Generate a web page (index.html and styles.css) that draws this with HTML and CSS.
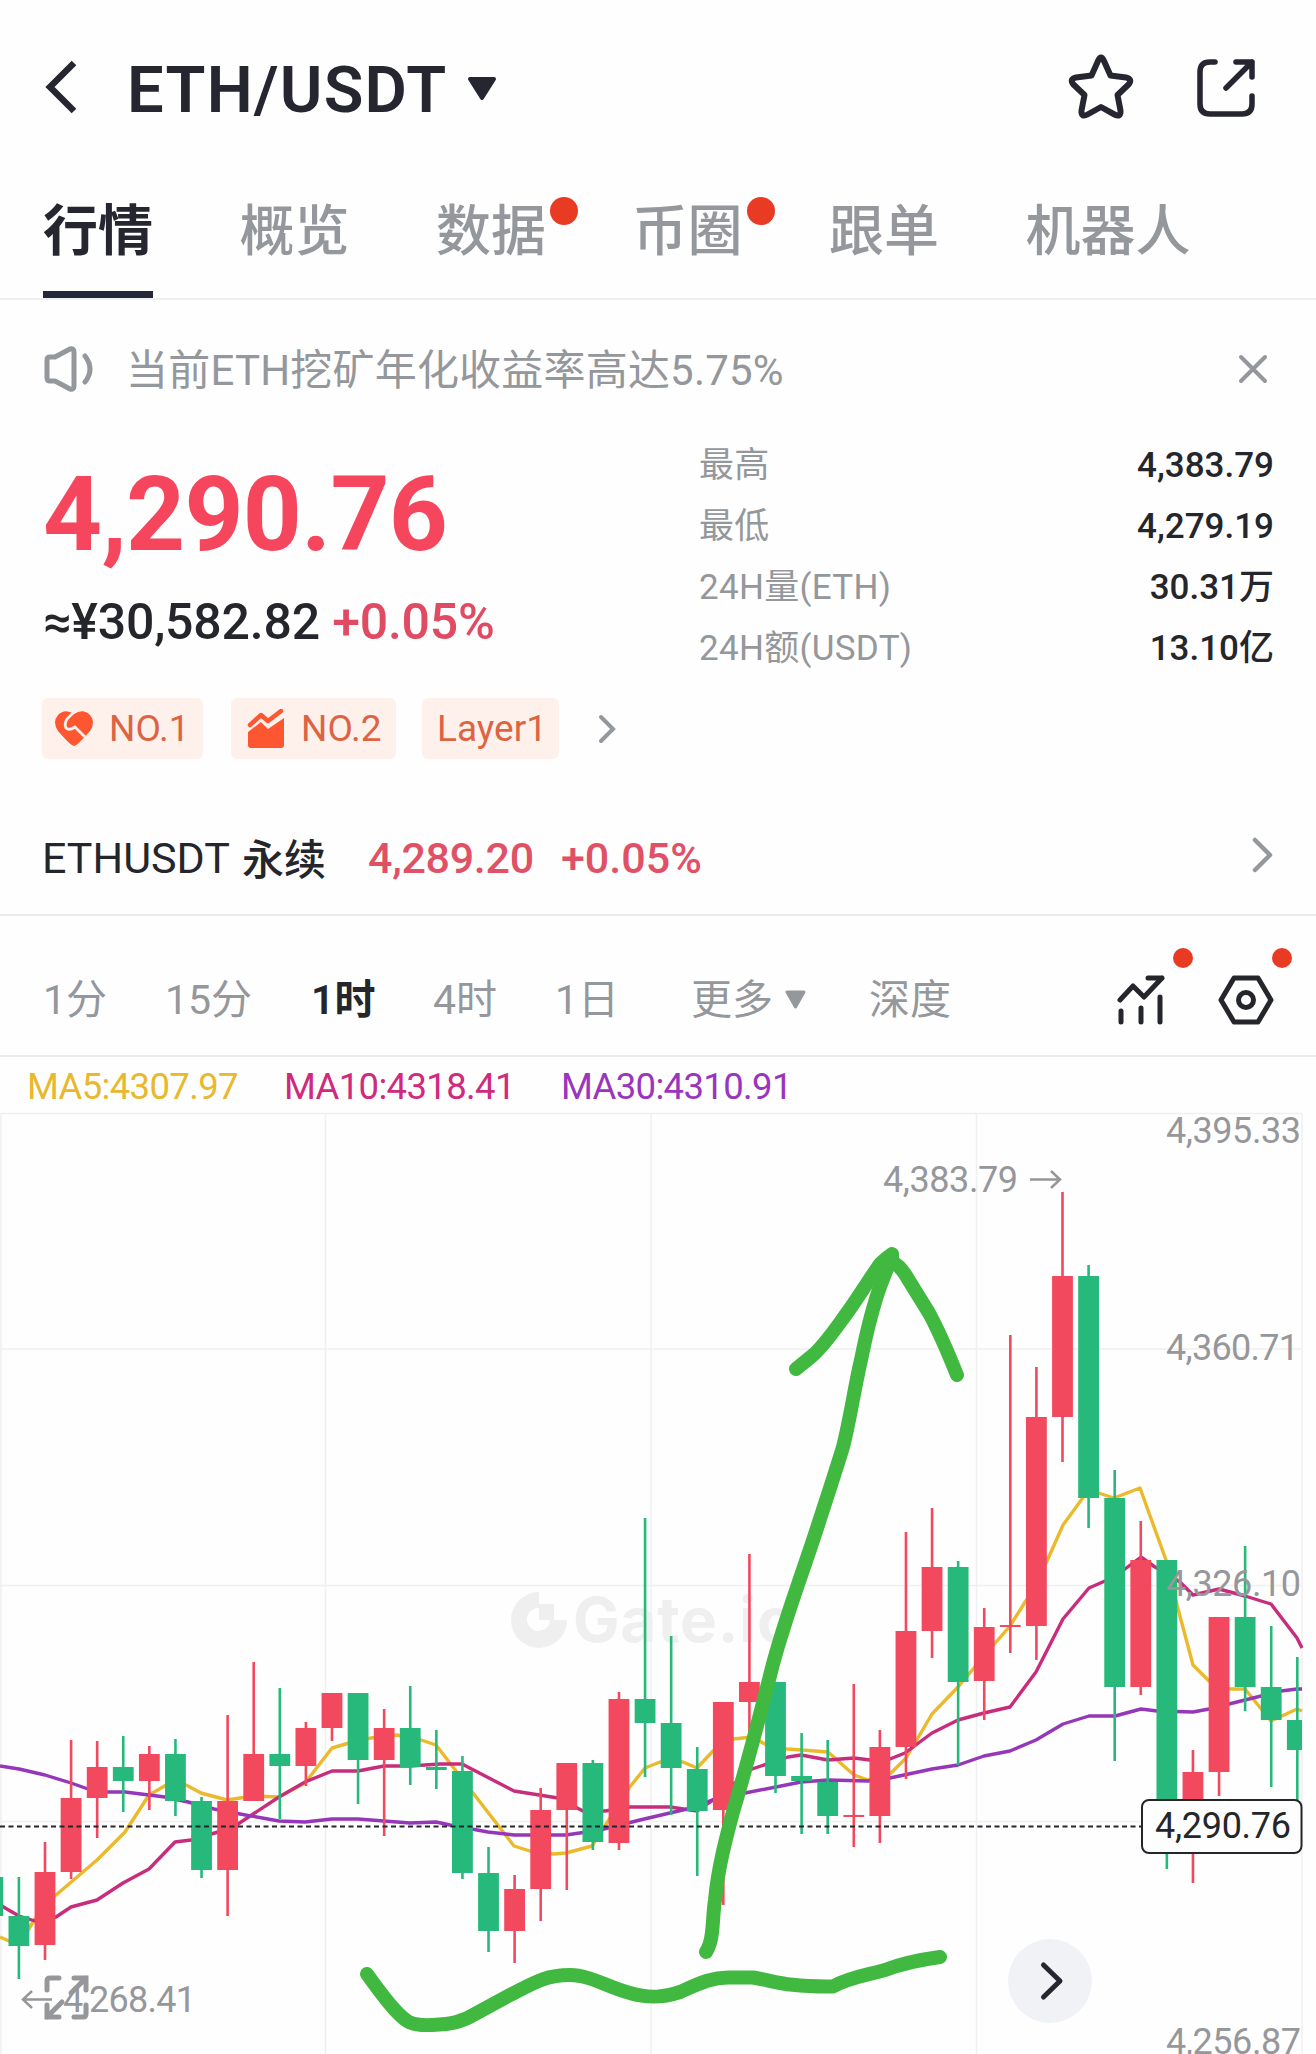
FILE: index.html
```html
<!DOCTYPE html>
<html lang="zh-CN">
  <head>
    <title>ETH/USDT</title>
    <meta charset="UTF-8" />
    <meta name="viewport" content="width=device-width, initial-scale=1.0" />
    <link rel="stylesheet" href="styles.css">
  </head>
  <body>
    <header class="header">
      <svg class="back" width="34" height="56" viewBox="0 0 34 56">
        <path d="M30 4 L6 28 L30 52" fill="none" stroke="#25262f" stroke-width="6.500" />
      </svg>
      <h1 class="pair">ETH/USDT</h1>
      <svg class="pair-caret" width="30" height="26" viewBox="0 0 30 26">
        <path d="M3 3 H27 L15 22 Z" fill="#25262f" stroke="#25262f" stroke-width="4" stroke-linejoin="round" />
      </svg>
      <svg class="star" width="68" height="68" viewBox="0 0 68 68">
        <path d="M31 8 Q34 1 37 8 L43.500 22.500 L59 24.500 Q66 26 61.500 31.500 L50.500 42 L53.500 57.500 Q54 65 47.500 61.500 L34 54 L20.500 61.500 Q14 65 14.500 57.500 L17.500 42 L6.500 31.500 Q2 26 9 24.500 L24.500 22.500 Z" fill="none" stroke="#25262f" stroke-width="6" stroke-linejoin="round" />
      </svg>
      <svg class="share" width="60" height="60" viewBox="0 0 60 60">
        <path d="M19 4 H14 Q4 4 4 14 V46 Q4 56 14 56 H46 Q56 56 56 46 V38 M40 4 H56 V19 M56 4 L30 30" fill="none" stroke="#25262f" stroke-width="5.500" stroke-linecap="round" stroke-linejoin="round" />
      </svg>
    </header>

    <nav class="tabs">
      <a class="tab active">行情</a>
      <a class="tab">概览</a>
      <a class="tab">数据<i class="dot"></i></a>
      <a class="tab">币圈<i class="dot"></i></a>
      <a class="tab">跟单</a>
      <a class="tab">机器人</a>
    </nav>

    <div class="notice">
      <svg width="52" height="48" viewBox="0 0 52 48" fill="none" stroke="#94979b" stroke-width="5" stroke-linecap="round" stroke-linejoin="round">
        <path d="M4 15 Q4 12 7 12 H12 L27 4 Q31 3 31 7 V41 Q31 45 27 44 L12 36 H7 Q4 36 4 33 Z" />
        <path d="M42 11 Q52 24 42 37" />
      </svg>
      <span class="notice-text">当前ETH挖矿年化收益率高达5.75%</span>
      <svg class="close" width="30" height="30" viewBox="0 0 30 30">
        <path d="M3 3 L27 27 M27 3 L3 27" stroke="#94979b" stroke-width="4" stroke-linecap="round" />
      </svg>
    </div>

    <section class="ticker">
      <div class="ticker-left">
        <div class="price">4,290.76</div>
        <div class="fiat">≈¥30,582.82 <span class="up">+0.05%</span></div>
      </div>
      <div class="stats">
        <div class="stat"><span>最高</span><b>4,383.79</b></div>
        <div class="stat"><span>最低</span><b>4,279.19</b></div>
        <div class="stat"><span>24H量(ETH)</span><b>30.31万</b></div>
        <div class="stat"><span>24H额(USDT)</span><b>13.10亿</b></div>
      </div>
    </section>

    <div class="tags">
      <span class="tag tag-hot">
        <svg width="40" height="38" viewBox="0 0 40 38">
          <path d="M20 36 Q16 35 4 21 Q-2 12 4 5 Q11 -2 20 4 Q29 -2 36 5 Q42 12 36 21 Q24 35 20 36 Z" fill="#fd5631" />
          <path d="M20 2 L13 9 Q10 14 12 18 Q15 21 21 17 L32 28" fill="none" stroke="#fef1ec" stroke-width="2.800" />
        </svg>
        NO.1
      </span>
      <span class="tag tag-rank">
        <svg width="38" height="40" viewBox="0 0 38 40">
          <path d="M3 16 L14 6 L21 12 L34 2" fill="none" stroke="#fd5631" stroke-width="4.500" stroke-linecap="round" stroke-linejoin="round" />
          <path d="M1 23 L14 13 L21 20 L37 9 V36 Q37 39 34 39 H4 Q1 39 1 36 Z" fill="#fd5631" />
        </svg>
        NO.2
      </span>
      <span class="tag tag-layer">Layer1</span>
      <svg class="tags-more" width="18" height="30" viewBox="0 0 18 30">
        <path d="M3 3 L15 15 L3 27" fill="none" stroke="#94979b" stroke-width="4" stroke-linecap="round" />
      </svg>
    </div>

    <div class="perp">
      <span class="perp-name">ETHUSDT</span>
      <span class="perp-type">永续</span>
      <span class="perp-price">4,289.20</span>
      <span class="perp-change">+0.05%</span>
      <svg class="perp-arrow" width="22" height="36" viewBox="0 0 22 36">
        <path d="M3 3 L18 18 L3 33" fill="none" stroke="#94979b" stroke-width="4.500" stroke-linecap="round" stroke-linejoin="round" />
      </svg>
    </div>

    <div class="intervals">
      <span class="iv">1分</span>
      <span class="iv iv-15m">15分</span>
      <span class="iv active">1时</span>
      <span class="iv">4时</span>
      <span class="iv iv-day">1日</span>
      <span class="iv iv-more">更多
        <svg width="21" height="20" viewBox="0 0 21 20"><path d="M2 2 H19 L10.500 17 Z" fill="#94979b" stroke="#94979b" stroke-width="3" stroke-linejoin="round" /></svg>
      </span>
      <span class="iv iv-depth">深度</span>
      <span class="tool tool-indicator">
        <svg width="48" height="50" viewBox="0 0 48 50" fill="none" stroke="#25262b" stroke-width="5" stroke-linecap="round" stroke-linejoin="round">
          <path d="M3 25 L16 11 L27 22 L45 3 M31 3 H45 M4 36 V47 M24 33 V47 M43 22 V47" />
        </svg>
        <i class="dot-sm"></i>
      </span>
      <span class="tool tool-settings">
        <svg width="56" height="50" viewBox="0 0 56 50" fill="none" stroke="#25262b" stroke-width="5" stroke-linejoin="round">
          <path d="M16 3 H40 L53 25 L40 47 H16 L3 25 Z" />
          <circle cx="28" cy="25" r="7.500" />
        </svg>
        <i class="dot-sm"></i>
      </span>
    </div>

    <div class="legend">
      <span class="ma5">MA5:4307.97</span>
      <span class="ma10">MA10:4318.41</span>
      <span class="ma30">MA30:4310.91</span>
    </div>

    <svg class="chart" width="1316" height="942" viewBox="0 1112 1316 942">
      <g class="grid">
        <path d="M1 1113.500 H1302 M0 1349 H1302 M0 1585.500 H1302 M0 1821.500 H1302" />
        <path d="M1 1113 V2054 M325.500 1113 V2054 M651 1113 V2054 M976.500 1113 V2054 M1302 1113 V2054" />
      </g>
      <g class="watermark">
        <path d="M539 1592 A28 28 0 1 0 567 1620 H550 A11.500 11.500 0 1 1 539 1608 Z" />
        <path d="M539 1604 H554 V1620 H539 Z" />
        <text x="573" y="1642" textLength="222">Gate.io</text>
      </g>

      <path class="line ma5-line" d="M0 1937 L9 1941 L22 1940 L33 1922 L45 1905 L56 1895 L97 1860 L125 1832 L149 1795 L175 1780 L188 1786 L201 1793 L227 1800 L253 1796 L279 1797 L305 1783 L332 1748 L349 1743 L371 1738 L397 1735 L421 1740 L436 1745 L473 1793 L514 1846 L530 1851 L553 1854 L566 1853 L592 1846 L605 1826 L629 1788 L645 1768 L660 1762 L683 1762 L697 1768 L713 1751 L733 1739 L752 1737 L765 1744 L787 1749 L802 1750 L828 1752 L854 1775 L868 1780 L891 1773 L906 1758 L932 1714 L958 1687 L984 1656 L1010 1626 L1027 1599 L1047 1561 L1063 1525 L1082 1499 L1089 1490 L1114 1498 L1140 1488 L1166 1560 L1177 1605 L1193 1665 L1209 1681 L1230 1689 L1245 1689 L1271 1721 L1297 1709 L1302 1711" />
      <path class="line ma10-line" d="M0 1905 L19 1916 L35 1921 L56 1917 L71 1907 L97 1900 L123 1883 L149 1869 L175 1842 L191 1840 L218 1832 L238 1824 L279 1797 L305 1782 L332 1771 L358 1771 L384 1766 L410 1766 L440 1764 L462 1764 L514 1791 L558 1798 L583 1811 L605 1811 L630 1807 L670 1807 L697 1811 L720 1795 L752 1769 L788 1757 L801 1755 L828 1760 L854 1758 L870 1760 L890 1759 L905 1753 L932 1733 L958 1720 L984 1713 L1010 1707 L1036 1672 L1063 1619 L1089 1588 L1105 1581 L1125 1569 L1141 1557 L1155 1567 L1180 1582 L1193 1595 L1219 1589 L1245 1596 L1271 1604 L1297 1638 L1302 1648" />
      <path class="line ma30-line" d="M0 1766 L19 1769 L45 1775 L71 1783 L88 1789 L108 1792 L125 1792 L165 1797 L188 1802 L214 1809 L240 1814 L279 1821 L305 1822 L332 1819 L358 1819 L384 1821 L410 1823 L436 1822 L450 1825 L488 1832 L514 1835 L566 1835 L600 1830 L640 1820 L687 1809 L715 1799 L745 1793 L776 1787 L801 1782 L828 1780 L868 1781 L890 1778 L932 1769 L958 1765 L984 1756 L1010 1751 L1036 1740 L1063 1724 L1089 1716 L1115 1716 L1141 1709 L1157 1711 L1193 1712 L1209 1709 L1245 1700 L1281 1691 L1297 1689 L1302 1689" />

      <g id="candles"></g>

      <path class="last-line" d="M0 1826.500 H1142" />

      <g class="axis">
        <text x="1166" y="1143" textLength="135">4,395.33</text>
        <text x="1166" y="1360" textLength="133">4,360.71</text>
        <text x="1166" y="1596" textLength="135">4,326.10</text>
        <text x="1166" y="2054" textLength="135">4,256.87</text>
        <text x="883" y="1192" textLength="135">4,383.79</text>
        <path d="M1030 1179.500 H1060 M1051 1171 L1060 1179.500 L1051 1188" />
        <text x="63" y="2012" textLength="133">4,268.41</text>
        <path d="M52 1999.500 H23 M32 1991 L23 1999.500 L32 2008" />
      </g>

      <rect class="last-box" x="1142" y="1800" width="159.500" height="53" rx="7" />
      <text class="last-text" x="1155" y="1838" textLength="136">4,290.76</text>

      <path class="expand" d="M47 1990 V1981 Q47 1978 50 1978 H59 M74 1978 H86 V1990 M86 1978 L71 1993 M86 2005 V2014 Q86 2017 83 2017 H74 M59 2017 H47 V2005 M47 2017 L62 2002" />

      <circle cx="1050" cy="1981" r="42" fill="#f1f2f6" />
      <path d="M1043.500 1965 L1060 1981 L1043.500 1997" fill="none" stroke="#25262f" stroke-width="5" stroke-linecap="round" stroke-linejoin="round" />

      <!-- hand drawn trend marks -->
      <g class="marker">
        <path d="M367 1974 C375 1985 384 1998 395 2010 C406 2022 411 2026 432 2025 C452 2024 462 2022 475 2014 L510 1995 C535 1982 546 1975 570 1975 C590 1975 610 1988 630 1993 C650 1999 665 1997 680 1992 C700 1983 712 1977 730 1977.500 H753 C775 1981 785 1987 833 1986.500 C850 1977 868 1975 885 1970 C903 1963 918 1960 940 1957" />
        <path d="M706 1952 C714 1940 712 1920 715 1900 C718 1868 726 1838 733 1812 C745 1772 760 1715 773 1664 C786 1615 802 1575 819 1522 C831 1485 836 1470 843 1447 C850 1420 855 1385 861 1360 C866 1335 874 1303 881 1284 L892 1256" />
        <path d="M796 1369 L812 1356 C824 1346 836 1328 847 1313 C860 1295 872 1275 880 1264 Q886 1258 892 1254 V1262 C899 1265 903 1270 908 1279 L929 1313 Q941 1335 957 1375" />
      </g>
    </svg>

    <script src="chart.js"></script>
  </body>
</html>
```
FILE: styles.css
```css
* {
  box-sizing: border-box;
}
body {
  margin: 0;
  width: 1316px;
  height: 2054px;
  overflow: hidden;
  background: #fefefe;
  color: #25262b;
  font-family: Roboto, "Noto Sans CJK SC", sans-serif;
}
svg {
  display: block;
  flex: none;
}
.header {
  display: flex;
  align-items: center;
  height: 174px;
  padding: 0 60px 0 44px;
}
.pair {
  margin: 5px 0 0 49px;
  width: 319px;
  font-size: 65px;
  font-weight: 600;
  line-height: 76px;
  letter-spacing: 1.200px;
  white-space: nowrap;
  color: #25262f;
}
.pair-caret {
  margin: 4px 0 0 21px;
}
.star {
  margin-left: auto;
}
.share {
  margin: 2px 0 0 61px;
}

.tabs {
  display: flex;
  gap: 86.500px;
  height: 126px;
  padding-left: 43px;
  border-bottom: 2px solid #efefef;
}
.tab {
  position: relative;
  height: 124px;
  font-size: 55px;
  font-weight: 500;
  line-height: 114px;
  color: #94979b;
}
.tab.active {
  font-weight: 700;
  color: #25262f;
  border-bottom: 7px solid #25263a;
}
.dot {
  position: absolute;
  top: 23px;
  right: -32px;
  width: 28px;
  height: 28px;
  border-radius: 50%;
  background: #e93a24;
}

.notice {
  display: flex;
  align-items: center;
  height: 134px;
  padding: 4px 48px 0 43px;
  font-size: 42px;
  color: #94979b;
}
.notice-text {
  margin: 3px 0 0 31px;
  line-height: 60px;
  letter-spacing: 0.200px;
}
.close {
  margin-left: auto;
}

.ticker {
  display: flex;
  height: 244px;
  padding: 0 42px 0 43px;
}
.ticker-left {
  width: 656px;
  padding-top: 20px;
}
.price {
  font-size: 103px;
  font-weight: 700;
  line-height: 122px;
  letter-spacing: -0.700px;
  color: #f5465d;
}
.fiat {
  font-size: 50px;
  font-weight: 500;
  line-height: 92px;
  letter-spacing: -0.200px;
  white-space: nowrap;
}
.up {
  color: #e04b63;
}
.stats {
  flex: 1;
}
.stat {
  display: flex;
  justify-content: space-between;
  height: 61px;
  font-size: 35px;
  line-height: 63px;
  color: #94979b;
}
.stat span {
  letter-spacing: 0.300px;
}
.stat b {
  font-weight: 500;
  color: #25262b;
}

.tags {
  display: flex;
  align-items: center;
  height: 61px;
  margin: 20px 0 0 42px;
}
.tag {
  display: flex;
  align-items: center;
  height: 61px;
  border-radius: 6px;
  background: #fef1ec;
  color: #dd6443;
  font-size: 37px;
  line-height: 63px;
}
.tag-hot {
  width: 161px;
  padding-left: 12px;
  gap: 15px;
}
.tag-rank {
  width: 165px;
  margin-left: 28px;
  padding-left: 16px;
  gap: 16px;
}
.tag-layer {
  width: 137px;
  margin-left: 26px;
  padding-left: 15px;
}
.tags-more {
  margin-left: 39px;
}

.perp {
  display: flex;
  align-items: center;
  height: 157px;
  padding: 43px 42px 0 42px;
  border-bottom: 2px solid #ebebeb;
  font-size: 43px;
  font-weight: 500;
}
.perp-name {
  width: 200px;
  font-weight: 400;
}
.perp-type {
  width: 126px;
  margin-top: -4px;
  font-size: 42px;
}
.perp-price {
  width: 193px;
  letter-spacing: -0.300px;
  color: #e05166;
}
.perp-change {
  color: #e05166;
}
.perp-arrow {
  margin: -6px 0 0 auto;
}

.intervals {
  display: flex;
  align-items: center;
  height: 141px;
  padding: 28px 42px 0 43px;
  border-bottom: 2px solid #ebebeb;
  font-size: 41px;
  line-height: 60px;
  color: #94979b;
}
.iv {
  width: 122px;
  white-space: nowrap;
}
.iv-15m {
  width: 146px;
}
.iv.active {
  color: #25262b;
  font-weight: 600;
}
.iv-day {
  width: 136px;
}
.iv-more {
  display: flex;
  align-items: center;
  width: 178px;
  gap: 12px;
}
.tool {
  position: relative;
}
.tool-indicator {
  margin-left: auto;
}
.tool-settings {
  margin-left: 53px;
}
.dot-sm {
  position: absolute;
  top: -27px;
  right: -28px;
  width: 20px;
  height: 20px;
  border-radius: 50%;
  background: #e93a24;
}
.tool-settings .dot-sm {
  right: -18px;
}

.legend {
  display: flex;
  height: 55px;
  padding: 4px 0 0 27px;
  font-size: 36.500px;
  line-height: 51px;
  letter-spacing: -0.650px;
}
.legend span {
  width: 277px;
}
.legend .ma5 {
  width: 257px;
  color: #e8b82e;
}
.ma10 {
  color: #cf2a7e;
}
.ma30 {
  color: #9a35bd;
}

.chart {
  overflow: visible;
}
.chart text {
  font-family: Roboto, sans-serif;
  font-size: 36px;
}
.grid path {
  fill: none;
  stroke: #eff0f1;
  stroke-width: 1.500;
}
.watermark {
  fill: #efefef;
}
.chart .watermark text {
  font-family: Inter, sans-serif;
  font-size: 62px;
  font-weight: 700;
}
.line {
  fill: none;
  stroke-width: 3.400;
  stroke-linejoin: round;
}
.ma5-line {
  stroke: #ebb92c;
}
.ma10-line {
  stroke: #c82c7c;
}
.ma30-line {
  stroke: #9636b8;
}
.candle-up {
  fill: #f2495e;
}
.candle-down {
  fill: #26b97b;
}
.last-line {
  stroke: #25262b;
  stroke-width: 2;
  stroke-dasharray: 5 3.500;
}
.axis text {
  fill: #96979b;
}
.axis path {
  fill: none;
  stroke: #96979b;
  stroke-width: 2.500;
}
.last-box {
  fill: #fefefe;
  stroke: #25262b;
  stroke-width: 2;
}
.last-text {
  fill: #25262b;
}
.expand {
  fill: none;
  stroke: #96979b;
  stroke-width: 5;
  stroke-linecap: round;
}
.marker path {
  fill: none;
  stroke: #41b941;
  stroke-width: 14;
  stroke-linecap: round;
  stroke-linejoin: round;
}
```
FILE: chart.js
```js
// [direction, wick top, body top, body bottom, wick bottom]
const candles = [
  ["down", 1877, 1877, 1916, 1916],
  ["down", 1877, 1916, 1946, 1979],
  ["up", 1842, 1872, 1945, 1960],
  ["up", 1740, 1798, 1872, 1879],
  ["up", 1741, 1767, 1798, 1838],
  ["down", 1736, 1767, 1781, 1812],
  ["up", 1746, 1754, 1781, 1810],
  ["down", 1739, 1754, 1801, 1816],
  ["down", 1797, 1801, 1870, 1878],
  ["up", 1715, 1801, 1870, 1916],
  ["up", 1662, 1754, 1801, 1801],
  ["down", 1688, 1754, 1766, 1819],
  ["up", 1722, 1728, 1766, 1786],
  ["up", 1693, 1693, 1728, 1741],
  ["down", 1693, 1693, 1760, 1804],
  ["up", 1709, 1728, 1760, 1836],
  ["down", 1686, 1728, 1767, 1785],
  ["down", 1730, 1767, 1770, 1789],
  ["down", 1756, 1771, 1873, 1879],
  ["down", 1847, 1873, 1931, 1952],
  ["up", 1875, 1889, 1931, 1963],
  ["up", 1788, 1810, 1889, 1921],
  ["up", 1763, 1763, 1810, 1890],
  ["down", 1760, 1763, 1842, 1850],
  ["up", 1692, 1699, 1843, 1850],
  ["down", 1518, 1699, 1723, 1777],
  ["down", 1636, 1723, 1768, 1815],
  ["down", 1747, 1769, 1811, 1876],
  ["up", 1702, 1702, 1810, 1905],
  ["up", 1554, 1682, 1702, 1744],
  ["down", 1682, 1682, 1776, 1793],
  ["down", 1733, 1776, 1781, 1834],
  ["down", 1740, 1782, 1816, 1834],
  ["up", 1684, 1815, 1817, 1847],
  ["up", 1730, 1747, 1816, 1843],
  ["up", 1532, 1631, 1747, 1779],
  ["up", 1508, 1567, 1631, 1658],
  ["down", 1561, 1567, 1682, 1765],
  ["up", 1608, 1627, 1681, 1720],
  ["up", 1335, 1625, 1627, 1653],
  ["up", 1367, 1417, 1626, 1660],
  ["up", 1192, 1276, 1417, 1462],
  ["down", 1265, 1276, 1498, 1528],
  ["down", 1470, 1498, 1687, 1761],
  ["up", 1521, 1560, 1687, 1695],
  ["down", 1560, 1560, 1812, 1869],
  ["up", 1750, 1772, 1812, 1883],
  ["up", 1617, 1617, 1772, 1796],
  ["down", 1546, 1617, 1687, 1711],
  ["down", 1626, 1687, 1720, 1787],
  ["down", 1657, 1720, 1750, 1800],
];

const ns = "http://www.w3.org/2000/svg";
const group = document.getElementById("candles");
const step = 26.09;
const right = 1302;

function addRect(x, y, width, height, dir) {
  const rect = document.createElementNS(ns, "rect");
  rect.setAttribute("x", x);
  rect.setAttribute("y", y);
  rect.setAttribute("width", Math.min(width, right - x));
  rect.setAttribute("height", height);
  rect.setAttribute("class", "candle-" + dir);
  group.appendChild(rect);
}

candles.forEach(([dir, high, top, bottom, low], i) => {
  const center = 18.9 + (i - 1) * step;
  addRect(center - 1.3, high, 2.6, low - high, dir);
  addRect(center - 10.4, top, 20.8, bottom - top, dir);
});
```
